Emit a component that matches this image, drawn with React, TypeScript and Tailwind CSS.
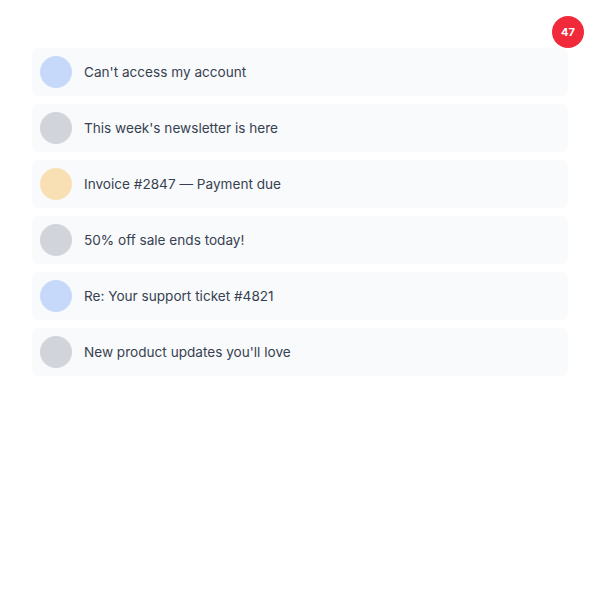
export default function App() {
  const items = [
    { text: "Can't access my account", color: "bg-[#c6d9fb]" },
    { text: "This week's newsletter is here", color: "bg-[#d1d5db]" },
    { text: "Invoice #2847 — Payment due", color: "bg-[#f8e0b4]" },
    { text: "50% off sale ends today!", color: "bg-[#d1d5db]" },
    { text: "Re: Your support ticket #4821", color: "bg-[#c6d9fb]" },
    { text: "New product updates you'll love", color: "bg-[#d1d5db]" },
  ];
  return (
    <div className="min-h-screen bg-white px-8 pt-12 font-['Inter',sans-serif]">
      <div className="relative">
        <div className="absolute -top-8 -right-4 flex h-8 w-8 items-center justify-center rounded-full bg-[#f02a3a] text-[11px] font-bold text-white">
          47
        </div>
        <div className="flex flex-col gap-2">
          {items.map((it) => (
            <div key={it.text} className="flex h-12 items-center gap-3 rounded-md bg-[#f9fafb] px-2">
              <div className={`h-8 w-8 shrink-0 rounded-full ${it.color}`} />
              <span className="text-[13.6px] text-[#374151]">{it.text}</span>
            </div>
          ))}
        </div>
      </div>
    </div>
  );
}
